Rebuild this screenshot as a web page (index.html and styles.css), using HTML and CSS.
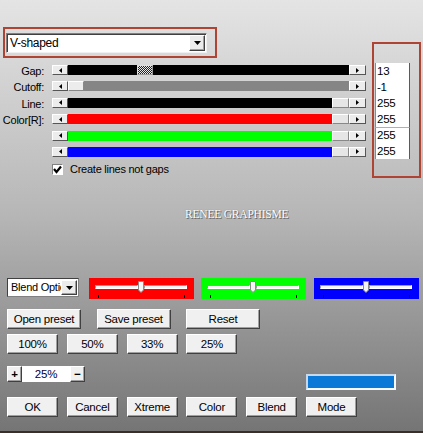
FILE: index.html
```html
<!DOCTYPE html>
<html>
<head>
<meta charset="utf-8">
<link rel="stylesheet" href="styles.css">
</head>
<body>
<div class="page">
  <div class="upper">
    <div class="left">
      <div class="ddframe">
        <div class="dd">
          <span class="ddtext">V-shaped</span>
          <span class="ddbtn"><svg width="7" height="4" viewBox="0 0 7 4"><polygon points="0,0 7,0 3.5,4" fill="#000"/></svg></span>
        </div>
      </div>
      <div class="sliders">
        <div class="srow">
          <span class="lbl">Gap:</span>
          <span class="abtn"><svg width="3" height="5" viewBox="0 0 3 5"><polygon points="3,0 3,5 0,2.5" fill="#000"/></svg></span>
          <span class="track">
            <span class="seg black" style="width:69px"></span>
            <span class="thumb dither"></span>
            <span class="seg black fill"></span>
          </span>
          <span class="abtn r"><svg width="3" height="5" viewBox="0 0 3 5"><polygon points="0,0 0,5 3,2.5" fill="#000"/></svg></span>
        </div>
        <div class="srow">
          <span class="lbl">Cutoff:</span>
          <span class="abtn"><svg width="3" height="5" viewBox="0 0 3 5"><polygon points="3,0 3,5 0,2.5" fill="#000"/></svg></span>
          <span class="track">
            <span class="thumb"></span>
            <span class="seg grey fill"></span>
          </span>
          <span class="abtn r"><svg width="3" height="5" viewBox="0 0 3 5"><polygon points="0,0 0,5 3,2.5" fill="#000"/></svg></span>
        </div>
        <div class="srow">
          <span class="lbl">Line:</span>
          <span class="abtn"><svg width="3" height="5" viewBox="0 0 3 5"><polygon points="3,0 3,5 0,2.5" fill="#000"/></svg></span>
          <span class="track">
            <span class="seg black fill"></span>
            <span class="thumb end"></span>
          </span>
          <span class="abtn r"><svg width="3" height="5" viewBox="0 0 3 5"><polygon points="0,0 0,5 3,2.5" fill="#000"/></svg></span>
        </div>
        <div class="srow">
          <span class="lbl">Color[R]:</span>
          <span class="abtn"><svg width="3" height="5" viewBox="0 0 3 5"><polygon points="3,0 3,5 0,2.5" fill="#000"/></svg></span>
          <span class="track">
            <span class="seg red fill"></span>
            <span class="thumb end"></span>
          </span>
          <span class="abtn r"><svg width="3" height="5" viewBox="0 0 3 5"><polygon points="0,0 0,5 3,2.5" fill="#000"/></svg></span>
        </div>
        <div class="srow">
          <span class="lbl"></span>
          <span class="abtn"><svg width="3" height="5" viewBox="0 0 3 5"><polygon points="3,0 3,5 0,2.5" fill="#000"/></svg></span>
          <span class="track">
            <span class="seg green fill"></span>
            <span class="thumb end"></span>
          </span>
          <span class="abtn r"><svg width="3" height="5" viewBox="0 0 3 5"><polygon points="0,0 0,5 3,2.5" fill="#000"/></svg></span>
        </div>
        <div class="srow">
          <span class="lbl"></span>
          <span class="abtn"><svg width="3" height="5" viewBox="0 0 3 5"><polygon points="3,0 3,5 0,2.5" fill="#000"/></svg></span>
          <span class="track">
            <span class="seg blue fill"></span>
            <span class="thumb end"></span>
          </span>
          <span class="abtn r"><svg width="3" height="5" viewBox="0 0 3 5"><polygon points="0,0 0,5 3,2.5" fill="#000"/></svg></span>
        </div>
      </div>
      <div class="check">
        <span class="cbx"><svg width="9" height="9" viewBox="0 0 9 9"><polyline points="1,4 3.5,7 8,1.5" fill="none" stroke="#000" stroke-width="2.2"/></svg></span>
        <span class="ctext">Create lines not gaps</span>
      </div>
    </div>
    <div class="numframe">
      <div class="numgroup">
        <div class="num">13</div>
        <div class="num">-1</div>
        <div class="num">255</div>
        <div class="num">255</div>
      </div>
      <div class="numgroup second">
        <div class="num">255</div>
        <div class="num">255</div>
      </div>
    </div>
  </div>

  <div class="watermark">RENEE GRAPHISME</div>

  <div class="blendrow">
    <div class="bdd">
      <span class="bddtext">Blend Options</span>
      <span class="ddbtn small"><svg width="7" height="4" viewBox="0 0 7 4"><polygon points="0,0 7,0 3.5,4" fill="#000"/></svg></span>
    </div>
    <div class="cbox redbox">
      <div class="csl"><span class="ctr"></span><svg class="cthumb" width="6" height="12" viewBox="0 0 6 12"><polygon points="0.5,0.5 5.5,0.5 5.5,9 3,11.5 0.5,9" fill="#f4f4f4" stroke="#8a8a8a" stroke-width="1"/></svg><span class="ctr"></span></div>
      <div class="ticks"><span class="tick"></span><span class="tick"></span></div>
    </div>
    <div class="cbox greenbox">
      <div class="csl"><span class="ctr"></span><svg class="cthumb" width="6" height="12" viewBox="0 0 6 12"><polygon points="0.5,0.5 5.5,0.5 5.5,9 3,11.5 0.5,9" fill="#f4f4f4" stroke="#8a8a8a" stroke-width="1"/></svg><span class="ctr"></span></div>
      <div class="ticks"><span class="tick"></span><span class="tick"></span></div>
    </div>
    <div class="cbox bluebox">
      <div class="csl"><span class="ctr"></span><svg class="cthumb" width="6" height="12" viewBox="0 0 6 12"><polygon points="0.5,0.5 5.5,0.5 5.5,9 3,11.5 0.5,9" fill="#f4f4f4" stroke="#8a8a8a" stroke-width="1"/></svg><span class="ctr"></span></div>
      <div class="ticks"><span class="tick"></span><span class="tick"></span></div>
    </div>
  </div>

  <div class="row row1">
    <span class="btn wide">Open preset</span>
    <span class="btn wide">Save preset</span>
    <span class="btn wide">Reset</span>
  </div>

  <div class="row row2">
    <span class="btn">100%</span>
    <span class="btn">50%</span>
    <span class="btn">33%</span>
    <span class="btn">25%</span>
  </div>

  <div class="row row3">
    <span class="btn tiny">+</span>
    <span class="zoomfield">25%</span>
    <span class="btn tiny">&minus;</span>
    <span class="swatch"></span>
  </div>

  <div class="row row4">
    <span class="btn">OK</span>
    <span class="btn">Cancel</span>
    <span class="btn">Xtreme</span>
    <span class="btn">Color</span>
    <span class="btn">Blend</span>
    <span class="btn">Mode</span>
  </div>
</div>
</body>
</html>
```

FILE: styles.css
```css
html, body {
  margin: 0;
  padding: 0;
}

body {
  width: 423px;
  height: 433px;
  overflow: hidden;
}

.page {
  width: 423px;
  height: 433px;
  box-sizing: border-box;
  padding-top: 27px;
  background: linear-gradient(#e4e4e4 0%, #b6b6b6 50%, #757575 100%);
  border-bottom: 2px solid #3a2e26;
  font-family: "Liberation Sans", Arial, sans-serif;
  font-size: 11px;
  letter-spacing: -0.25px;
  color: #000;
}

.upper {
  display: flex;
  align-items: flex-start;
}

.left {
  width: 366px;
}

/* top dropdown */
.ddframe {
  margin-left: 3px;
  width: 214px;
  height: 31px;
  box-sizing: border-box;
  border: 2px solid #b04434;
  padding: 4px 0 0 1px;
}

.dd {
  width: 201px;
  height: 20px;
  box-sizing: border-box;
  background: #fff;
  border: 1px solid;
  border-color: #808080 #f0f0f0 #f0f0f0 #808080;
  box-shadow: inset 1px 1px 0 #404040;
  display: flex;
  align-items: center;
  padding: 0 1px 0 3px;
}

.ddtext {
  flex: 1;
  line-height: 16px;
  font-size: 12px;
  letter-spacing: -0.3px;
}

.ddbtn {
  width: 16px;
  height: 16px;
  box-sizing: border-box;
  background: #ececec;
  border: 1px solid;
  border-color: #fff #404040 #404040 #fff;
  box-shadow: inset -1px -1px 0 #a0a0a0;
  display: flex;
  align-items: center;
  justify-content: center;
}

.ddbtn.small {
  width: 16px;
  height: 15px;
}

/* sliders */
.sliders {
  margin-top: 7px;
}

.srow {
  height: 16.4px;
  display: flex;
  align-items: flex-start;
}

.lbl {
  width: 52px;
  box-sizing: border-box;
  padding-right: 8px;
  text-align: right;
  height: 10px;
  line-height: 10px;
  margin-top: 1px;
  white-space: nowrap;
}

.abtn {
  width: 16px;
  height: 10px;
  box-sizing: border-box;
  background: #ececec;
  border: 1px solid;
  border-color: #fff #555 #555 #fff;
  display: flex;
  align-items: center;
  justify-content: center;
}

.abtn.r {
  width: 17px;
}

.track {
  width: 281px;
  height: 10px;
  display: flex;
}

.seg {
  height: 10px;
}

.seg.fill {
  flex: 1;
}

.black { background: #000; }
.grey { background: #858585; }
.red { background: #ff0000; }
.green { background: #00ff00; }
.blue { background: #0000ff; }

.thumb {
  width: 16px;
  height: 10px;
  box-sizing: border-box;
  background: #ececec;
  border: 1px solid;
  border-color: #fff #888 #888 #fff;
}

.thumb.end {
  width: 17px;
  background: #e6e6e6;
}

.thumb.dither {
  background: repeating-conic-gradient(#222 0 25%, #e8e8e8 0 50%) 0 0 / 2px 2px;
  border-color: #ddd #999 #999 #ddd;
}

/* checkbox */
.check {
  margin-top: 0px;
  margin-left: 52px;
  display: flex;
  align-items: center;
  height: 12px;
}

.cbx {
  width: 11px;
  height: 11px;
  box-sizing: border-box;
  background: #fff;
  border: 1px solid;
  border-color: #808080 #fff #fff #808080;
  display: flex;
  align-items: center;
  justify-content: center;
}

.ctext {
  margin-left: 7px;
  line-height: 12px;
}

/* numbers */
.numframe {
  margin-left: 6px;
  margin-top: 15px;
  width: 49px;
  height: 136px;
  box-sizing: border-box;
  border: 2px solid #b04434;
  padding: 19px 0 0 1px;
}

.numgroup {
  width: 35px;
  background: #fff;
  box-sizing: border-box;
  border-left: 1px solid #8a8a8a;
  border-right: 1px solid #5a5a5a;
}

.numgroup.second {
  border-top: 1px solid #b0b0b0;
}

.num {
  height: 16px;
  line-height: 16px;
  padding-left: 1px;
  font-size: 11.5px;
}

.numgroup.second .num:first-child {
  height: 15px;
  line-height: 15px;
}

/* watermark */
.watermark {
  margin-top: 29px;
  padding-left: 185px;
  height: 14px;
  line-height: 14px;
  font-family: "Liberation Serif", "Times New Roman", serif;
  font-size: 11.5px;
  letter-spacing: -0.2px;
  color: #fff;
  text-shadow: 1px 1px 0 #6a6a6a, 0 0 1px #777;
}

/* blend row */
.blendrow {
  margin-top: 57px;
  margin-left: 7px;
  display: flex;
  align-items: flex-start;
}

.bdd {
  width: 72px;
  height: 19px;
  box-sizing: border-box;
  background: #fff;
  border: 1px solid;
  border-color: #404040 #808080 #808080 #404040;
  display: flex;
  align-items: center;
  padding: 0 1px 0 3px;
}

.bddtext {
  flex: 1;
  overflow: hidden;
  white-space: nowrap;
  line-height: 15px;
}

.cbox {
  width: 105px;
  height: 21px;
  box-sizing: border-box;
  padding: 3px 0 0 6px;
}

.redbox { margin-left: 10px; background: #ff0000; }
.greenbox { margin-left: 7px; background: #00ff00; }
.bluebox { margin-left: 8px; background: #0000ff; }

.csl {
  width: 92px;
  height: 12px;
  display: flex;
  align-items: center;
}

.ctr {
  flex: 1;
  height: 4px;
  box-sizing: border-box;
  background: #f4f4f4;
  border: 1px solid;
  border-color: #999 #fff #fff #999;
}

.cthumb {
  display: block;
}

.ticks {
  width: 92px;
  margin-top: 2px;
  box-sizing: border-box;
  padding: 0 2px 0 3px;
  display: flex;
  justify-content: space-between;
}

.tick {
  width: 1px;
  height: 3px;
  background: #000;
}

/* button rows */
.row {
  display: flex;
  align-items: flex-start;
  margin-left: 7px;
  gap: 8.8px;
}

.row1 { margin-top: 10px; gap: 15.5px; }
.row2 { margin-top: 5px; }
.row3 { margin-top: 12px; gap: 0; }
.row4 { margin-top: 7px; }

.btn {
  width: 51px;
  height: 20px;
  box-sizing: border-box;
  background: #f0f0f0;
  border: 1px solid;
  border-color: #fff #404040 #404040 #fff;
  box-shadow: inset -1px -1px 0 #a0a0a0;
  display: flex;
  align-items: center;
  justify-content: center;
  line-height: 14px;
  font-size: 11.5px;
  white-space: nowrap;
}

.btn.wide {
  width: 74px;
}

.btn.tiny {
  width: 15px;
  height: 16px;
  font-weight: bold;
}

.zoomfield {
  width: 48px;
  height: 16px;
  box-sizing: border-box;
  background: #fff;
  color: #000040;
  text-align: center;
  line-height: 16px;
  font-size: 11.5px;
}

.swatch {
  margin-left: 221px;
  margin-top: 8px;
  width: 90px;
  height: 16px;
  box-sizing: border-box;
  background: #0a78d6;
  border: 2px solid #e8f0f8;
  border-color: #c8d8e8 #f4f8ff #f4f8ff #c8d8e8;
}
```
